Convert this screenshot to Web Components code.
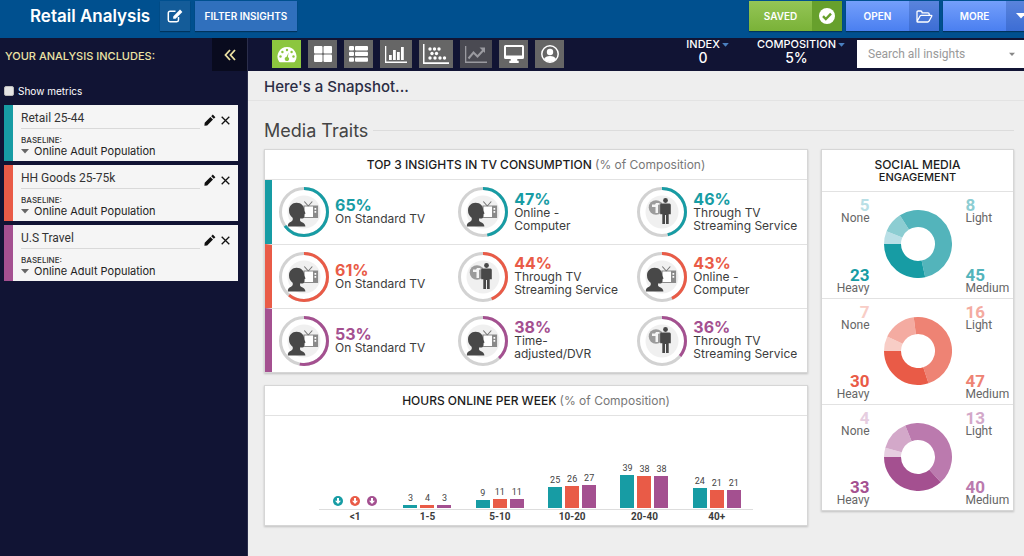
<!DOCTYPE html>
<html lang="en">
<head>
<meta charset="utf-8">
<meta name="viewport" content="width=device-width, initial-scale=1">
<title>Retail Analysis</title>
<style>
  html { --teal: #179ca4; --red: #e95b47; --plum: #a45090; --navy: #111434; --line: #e2e2e2; }
  body { margin: 0; min-height: 100vh; background: #eee; color: #3c3c3c; font: 12px/16px Inter, "Liberation Sans", sans-serif; }
</style>
</head>
<body>
<analysis-app></analysis-app>

<script>
const BASE = `<style>
  :host { display: block; box-sizing: border-box; }
  *, *::before, *::after { box-sizing: border-box; }
  button, input { font: inherit; color: inherit; margin: 0; padding: 0; border: 0; border-radius: 0; background: none; }
  button { cursor: pointer; }
  h1, h2, h3, p { margin: 0; font-weight: inherit; font-size: inherit; }
  svg { display: block; }
</style>`;

const element = (name, render) => customElements.define(name, class extends HTMLElement {
  connectedCallback() {
    if (this.shadowRoot) return;
    const t = document.createElement('template');
    t.innerHTML = BASE + render(this);
    this.attachShadow({ mode: 'open' }).append(t.content.cloneNode(true));
  }
});

const svg = (w, h, body) => `<svg width="${w}" height="${h}" viewBox="0 0 ${w} ${h}" fill="currentColor" aria-hidden="true">${body}</svg>`;

const ICONS = {
  edit: svg(16, 14, '<path d="M11.5 8v3a1.7 1.7 0 0 1-1.7 1.7H3A1.7 1.7 0 0 1 1.3 11V4A1.7 1.7 0 0 1 3 2.3h5.500" fill="none" stroke="currentColor" stroke-width="1.5"/><path d="M13 .6 15.4 3 8.6 9.8H6.2V7.4z"/>'),
  check: svg(16, 16, '<circle cx="8" cy="8" r="8" fill="#fff"/><path d="m4 8.200 2.800 2.800L12 5.600" fill="none" stroke="#67a02c" stroke-width="2.4"/>'),
  folder: svg(17, 13, '<path d="M1 11V2.200q0-1.200 1.200-1.200h2.600Q6 1 6 2.200v.6h6q1.200 0 1.200 1.200v1.500M1 11.500 4.200 5.800q.3-.5 1-.5h10q1 0 .5.9l-2.700 5q-.5.8-1.200.8H1.500Q.8 12 1 11.500z" fill="none" stroke="currentColor" stroke-width="1.3" stroke-linejoin="round"/>'),
  caret: svg(10, 6, '<path d="M0 0h10L5 5.500z"/>'),
  dashboard: svg(20, 17, '<path d="M10 1a9.500 9.500 0 0 0-8 14.600q.4.6 1 .6h14q.6 0 1-.6A9.500 9.500 0 0 0 10 1z"/><g fill="#8cc63f"><circle cx="3.5" cy="10.5" r="1.2"/><circle cx="5.4" cy="6" r="1.2"/><circle cx="10" cy="4" r="1.2"/><circle cx="14.6" cy="6" r="1.2"/><circle cx="16.5" cy="10.5" r="1.2"/><path d="m11.600 6.600-.7 4.300a2.200 2.200 0 1 1-1.300-.2z"/></g>'),
  tiles: svg(18, 16, '<rect width="8.5" height="7.4" rx="1"/><rect x="9.5" width="8.5" height="7.4" rx="1"/><rect y="8.6" width="8.5" height="7.4" rx="1"/><rect x="9.5" y="8.6" width="8.5" height="7.4" rx="1"/>'),
  list: svg(19, 16, '<rect width="5" height="4.4" rx="1"/><rect x="6" width="13" height="4.4" rx="1"/><rect y="5.7" width="5" height="4.4" rx="1"/><rect x="6" y="5.7" width="13" height="4.4" rx="1"/><rect y="11.4" width="5" height="4.4" rx="1"/><rect x="6" y="11.4" width="13" height="4.4" rx="1"/>'),
  bars: svg(22, 17, '<path d="M0 0h1.300v15.500H22V17H0zM4 9h2.800v5H4zM8 4h2.800v10H8zM12 6h2.800v8H12zM16 1h2.800v13H16z"/>'),
  scatter: svg(26, 20, '<path d="M0 0h1.500v18.300H26V20H0z"/><circle cx="7" cy="5" r="1.7"/><circle cx="11.500" cy="5" r="1.7"/><circle cx="16" cy="5" r="1.7"/><circle cx="9" cy="9.500" r="1.7"/><circle cx="13.500" cy="9.500" r="1.7"/><circle cx="7" cy="14" r="1.7"/><circle cx="12" cy="14" r="1.7"/><circle cx="17" cy="14" r="1.7"/><circle cx="21.500" cy="14" r="1.7"/>'),
  trend: svg(22, 17, '<path d="M0 0h1.300v15.500H22V17H0z"/><path d="m3.500 12.500 5-6 4 4L19 3.500" fill="none" stroke="currentColor" stroke-width="2"/><path d="M14.500 1.500H20V7z"/>'),
  screen: svg(20, 18, '<path fill-rule="evenodd" d="M1.500 0h17Q20 0 20 1.500v11q0 1.500-1.500 1.500h-5.200v1.800h1.400V18H5.300v-2.200h1.400V14H1.500Q0 14 0 12.500v-11Q0 0 1.500 0zM2 2v8.500h16V2z"/>'),
  user: svg(18, 18, '<circle cx="9" cy="9" r="8.2" fill="none" stroke="currentColor" stroke-width="1.5"/><circle cx="9" cy="7" r="3.2"/><path d="M3 14q1.500-3 6-3t6 3q-2.300 3-6 3t-6-3z"/>'),
  collapse: svg(12, 12, '<path d="M6 1 1.500 6 6 11M11 1 6.500 6 11 11" fill="none" stroke="currentColor" stroke-width="1.8"/>'),
  pencil: svg(12, 12, '<path d="m8.800.6 2.600 2.600-1.600 1.600-2.600-2.600zM6.400 3 9 5.600 3.200 11.400.4 11.800.7 8.800z"/>'),
  close: svg(9, 9, '<path d="m.7.7 7.600 7.600M8.300.7.7 8.300" stroke="currentColor" stroke-width="1.3"/>'),
  low: svg(10, 10, '<circle cx="5" cy="5" r="5"/><path d="M4 2h2v2.700h2L5 8 2 4.700h2z" fill="#fff"/>'),
};

/* Head in profile, looking at a television set. */
const VIEWER = `<path d="M26 20h13.500v11.500H26z" fill="#fff" stroke="#8a8a8a" stroke-width="1.2"/>
<path d="M35 20h4.500v11.500H35z" fill="#8a8a8a"/>
<path d="M36.500 22h1.700v1.700h-1.700zM36.500 25h1.700v1.700h-1.700z" fill="#fff"/>
<path d="m30.300 20-4-4.500M30.300 20l4-4.500" stroke="#777" stroke-width="1.1"/>
<path d="M18.500 16.800C23.500 16.800 26.200 20 26.200 24.500L27.600 27.400 26.400 28 26 31.500Q25.700 32.600 24 32.500L22 32.600Q21.500 35 23.500 36 27.200 37.200 27.400 40.500L9.800 40.500Q9.600 37 13 35.800 15.500 34.500 14.600 31.800 11 29 11 24.500C11 20 14.200 16.800 18.500 16.800Z" fill="#484848"/>`;
/* Standing figure beside a round remote-control badge. */
const PERSON = `<circle cx="20" cy="21.500" r="7.300" fill="#9b9b9b"/>
<path d="M16 18.500h3l1-1.500h3.500v1.800H22V27h-2.500v-6H16z" fill="#f4f4f4"/>
<circle cx="29.500" cy="14.500" r="2.400" fill="#484848"/>
<path d="M25.500 17.500H33.500Q34.800 17.500 34.800 19V28.200H32.700V38H30V29H29V38H26.300V28.200H24.200V19Q24.200 17.500 25.500 17.500Z" fill="#484848"/>`;

/* A header button; the icon attribute adds a shaded compartment at its end. */
element('action-button', el => {
  const icon = el.getAttribute('icon'), label = el.getAttribute('label');
  return `
<style>
  :host { height: 30px; }
  button { display: flex; align-items: stretch; width: 100%; height: 100%; color: #fff; font-size: 10px; font-weight: 600; background: var(--fill, #3070bd); box-shadow: 0 1px 1px rgba(0,0,0,.35); }
  .text { flex: 1; align-self: center; text-align: center; white-space: nowrap; }
  .icon { display: grid; place-items: center; width: 30px; background: var(--shade, transparent); }
</style>
<button type="button" ${label ? `aria-label="${label}"` : ''}>
  ${label ? '' : '<span class="text"><slot></slot></span>'}
  ${icon ? `<span class="icon">${ICONS[icon]}</span>` : ''}
</button>`;
});

element('app-header', () => `
<style>
  :host { display: flex; align-items: flex-start; height: 38px; padding-top: 1px; background: #00508f; color: #fff; overflow: hidden; }
  h1 { width: 130px; margin-left: 30px; font-size: 17px; font-weight: 600; line-height: 30px; white-space: nowrap; }
  .edit { width: 30px; margin-right: 5px; --fill: #145c99; }
  .filter { width: 102px; }
  .end { display: flex; gap: 4px; margin-left: auto; margin-right: -12px; }
  .end action-button { width: 93px; --fill: linear-gradient(#749ffb, #4a7ff0); --shade: rgba(30,70,150,.3); }
  .end .saved { --fill: linear-gradient(#94c556, #7ab238); --shade: #67a02c; }
</style>
<h1>Retail Analysis</h1>
<action-button class="edit" icon="edit" label="Edit title"></action-button>
<action-button class="filter">FILTER INSIGHTS</action-button>
<div class="end">
  <action-button class="saved" icon="check">SAVED</action-button>
  <action-button icon="folder">OPEN</action-button>
  <action-button icon="caret">MORE</action-button>
</div>`);

element('segment-card', () => `
<style>
  :host { display: grid; grid-template-columns: 9px 1fr auto; height: 56px; background: #f5f5f5; color: #333; }
  .strip { background: var(--tone); }
  .body { padding: 4px 0 0 8px; min-width: 0; }
  .name { font: 12px/18px Roboto, sans-serif; height: 20px; border-bottom: 1px solid #d9d9d9; }
  .label { margin-top: 6px; font-size: 8px; line-height: 10px; font-weight: 500; }
  .base { display: flex; align-items: center; gap: 5px; font-size: 11px; line-height: 13px; color: #222; white-space: nowrap; }
  .base svg { width: 8px; height: 5px; color: #666; }
  .tools { display: flex; gap: 5px; align-self: start; padding: 9px 8px 0 4px; color: #111; }
  .tools button { display: grid; place-items: center; height: 12px; }
</style>
<div class="strip"></div>
<div class="body">
  <h3 class="name"><slot></slot></h3>
  <div class="label">BASELINE:</div>
  <button type="button" class="base">${ICONS.caret}Online Adult Population</button>
</div>
<div class="tools">
  <button type="button" aria-label="Edit segment">${ICONS.pencil}</button>
  <button type="button" aria-label="Remove segment">${ICONS.close}</button>
</div>`);

element('side-panel', () => `
<style>
  :host { background: var(--navy); color: #fff; border-right: 1px solid #2b2e4c; }
  .top { display: flex; align-items: stretch; justify-content: space-between; height: 33px; padding-left: 5px; }
  h2 { align-self: center; padding-top: 2px; color: #ece2a4; font-size: 11px; font-weight: 500; white-space: nowrap; }
  .top button { display: grid; place-items: center; width: 35px; background: #090b1e; color: #ece2a4; }
  label { display: flex; align-items: center; gap: 4px; padding: 12px 4px 6px; font: 10px/16px Inter, sans-serif; }
  input { appearance: none; width: 10px; height: 10px; background: #e4e4e4; border: 1px solid #bbb; border-radius: 2px; }
  input:checked { background: var(--teal); }
  .cards { display: grid; gap: 4px; padding: 0 9px 16px 4px; }
</style>
<div class="top"><h2>YOUR ANALYSIS INCLUDES:</h2><button type="button" aria-label="Collapse panel">${ICONS.collapse}</button></div>
<label><input type="checkbox">Show metrics</label>
<div class="cards">
  <segment-card style="--tone: var(--teal)">Retail 25-44</segment-card>
  <segment-card style="--tone: var(--red)">HH Goods 25-75k</segment-card>
  <segment-card style="--tone: var(--plum)">U.S Travel</segment-card>
</div>`);

element('metric-picker', el => `
<style>
  button { display: block; color: #fff; font-size: 11px; line-height: 13px; font-weight: 500; text-align: center; }
  .name { display: flex; align-items: center; gap: 2px; }
  .name svg { width: 7px; height: 4px; color: #4a80c0; }
  .value { display: block; font-size: 14px; padding-right: 9px; }
</style>
<button type="button"><span class="name"><slot></slot>${ICONS.caret}</span><span class="value">${el.getAttribute('value')}</span></button>`);

element('tool-bar', () => `
<style>
  :host { display: flex; align-items: flex-start; height: 33px; padding: 2px 0 0 24px; background: var(--navy); }
  nav { display: flex; gap: 7px; }
  nav button { display: grid; place-items: center; width: 29px; height: 28px; background: #666; color: #fff; }
  nav .wide { width: 32px; }
  nav .widest { width: 34px; }
  nav .on { background: #8cc63f; }
  nav .off { background: #4a4a52; color: #9a9aa0; }
  .end { display: flex; align-items: flex-start; margin-left: auto; }
  .metrics { display: flex; gap: 28px; margin: -2px 12px 0 0; }
  .search { display: flex; align-items: center; width: 167px; height: 28px; padding: 0 9px 0 11px; background: #fff; color: #888; }
  input { flex: 1; min-width: 0; width: 0; font: 12px/16px Roboto, sans-serif; outline: 0; }
  input::placeholder { color: #999; opacity: 1; }
  .search svg { width: 6px; height: 5px; }
</style>
<nav aria-label="Views">
  <button type="button" class="on" aria-label="Snapshot">${ICONS.dashboard}</button>
  <button type="button" aria-label="Tiles">${ICONS.tiles}</button>
  <button type="button" aria-label="List">${ICONS.list}</button>
  <button type="button" class="wide" aria-label="Bar chart">${ICONS.bars}</button>
  <button type="button" class="widest" aria-label="Scatter plot">${ICONS.scatter}</button>
  <button type="button" class="wide off" aria-label="Trend" disabled>${ICONS.trend}</button>
  <button type="button" aria-label="Media">${ICONS.screen}</button>
  <button type="button" aria-label="Personas">${ICONS.user}</button>
</nav>
<div class="end">
  <div class="metrics">
    <metric-picker value="0">INDEX</metric-picker>
    <metric-picker value="5%">COMPOSITION</metric-picker>
  </div>
  <label class="search"><input type="text" placeholder="Search all insights" aria-label="Search all insights">${ICONS.caret}</label>
</div>`);

element('panel-card', () => `
<style>
  :host { background: #fff; border: 1px solid #d6d6d6; box-shadow: 0 1px 2px rgba(0,0,0,.2); }
  h3 { display: flex; flex-direction: column; justify-content: center; min-height: var(--head, 30px); border-bottom: 1px solid var(--line); color: #1c1c1c; font-size: 12px; line-height: 13px; font-weight: 500; text-align: center; }
</style>
<h3><slot name="title"></slot></h3>
<slot></slot>`);

element('insight-cell', el => `
<style>
  :host { display: flex; align-items: center; gap: 5px; min-width: 0; }
  svg { flex: none; }
  .text { min-width: 0; font-size: 12px; line-height: 13px; color: #3c3c3c; white-space: nowrap; }
  .text b { display: block; font-size: 16px; font-weight: 700; color: var(--tone); }
</style>
${svg(52, 52, `<circle cx="26" cy="26" r="16.500" fill="#f0f0f0"/>${el.getAttribute('icon') === 'viewer' ? VIEWER : PERSON}
<circle cx="26" cy="26" r="23.500" fill="none" stroke="#d2d2d2" stroke-width="3"/>
<circle cx="26" cy="26" r="23.500" fill="none" stroke="var(--tone)" stroke-width="3" pathLength="100" stroke-dasharray="${el.getAttribute('value')} 100" transform="rotate(-90 26 26)"/>`)}
<div class="text"><b>${el.getAttribute('value')}%</b><slot></slot></div>`);

const STREAM = 'Through TV<br>Streaming Service', COMPUTER = 'Online -<br>Computer', TV = 'On Standard TV';
const INSIGHTS = [
  ['teal', [[65, 'viewer', TV], [47, 'viewer', COMPUTER], [46, 'person', STREAM]]],
  ['red', [[61, 'viewer', TV], [44, 'person', STREAM], [43, 'viewer', COMPUTER]]],
  ['plum', [[53, 'viewer', TV], [38, 'viewer', 'Time-<br>adjusted/DVR'], [36, 'person', STREAM]]],
];
element('insight-rows', () => `
<style>
  .row { display: grid; grid-template-columns: 21fr 21fr 20fr; height: 64px; padding-left: 6px; border-left: 7px solid var(--tone); }
  .row + .row { border-top: 1px solid var(--line); }
</style>
${INSIGHTS.map(([tone, cells]) => `<div class="row" style="--tone: var(--${tone})">${cells.map(([v, i, t]) => `<insight-cell value="${v}" icon="${i}">${t}</insight-cell>`).join('')}</div>`).join('')}`);

const HOURS = [['&lt;1', [0, 0, 0]], ['1-5', [3, 4, 3]], ['5-10', [9, 11, 11]], ['10-20', [25, 26, 27]], ['20-40', [39, 38, 38]], ['40+', [24, 21, 21]]];
element('hours-chart', () => `
<style>
  :host { padding: 0 54px; font-family: Roboto, sans-serif; }
  .plot { display: grid; grid-template-columns: repeat(6, 1fr); padding-top: 45px; }
  .bars { display: flex; justify-content: center; align-items: flex-end; gap: 3px; height: 49px; padding-bottom: 1px; border-bottom: 1px solid #ddd; }
  .bar { width: 14px; font-size: 9px; line-height: 12px; text-align: center; color: #444; }
  .bar i { display: block; margin-top: 1px; background: var(--tone); }
  .bar svg { margin: 0 auto 2px 2px; color: var(--tone); }
  .label { display: block; font-size: 10px; line-height: 14px; font-weight: 700; text-align: center; }
</style>
<div class="plot">${HOURS.map(([name, vals]) => `<div><div class="bars">${vals.map((v, i) => `<div class="bar" style="--tone: var(--${['teal', 'red', 'plum'][i]})">${v ? `${v}<i style="height: ${Math.round(v * .85)}px"></i>` : ICONS.low}</div>`).join('')}</div><span class="label">${name}</span></div>`).join('')}</div>`);

const sector = (from, to, fill) => {
  const p = (a, r) => { const t = Math.PI * (1 + 2 * a); return `${(34 + r * Math.cos(t)).toFixed(2)} ${(34 + r * Math.sin(t)).toFixed(2)}`; };
  const big = to - from > .5 ? 1 : 0;
  return `<path fill="${fill}" d="M${p(from, 34)}A34 34 0 ${big} 1 ${p(to, 34)}L${p(to, 17)}A17 17 0 ${big} 0 ${p(from, 17)}z"/>`;
};
element('engagement-donut', el => {
  const vals = el.getAttribute('values').split(' ').map(Number);
  const tones = el.getAttribute('tones').split(' ');
  const total = vals.reduce((a, b) => a + b);
  let at = 0;
  const parts = vals.map((v, i) => { const s = sector(at / total, (at + v) / total, tones[i]); at += v; return s; }).join('');
  const cell = (i, name) => `<div class="k${i}"><b style="color: ${tones[i]}">${vals[i]}</b>${name}</div>`;
  return `
<style>
  :host { display: grid; grid-template-columns: 1fr 68px 1fr; grid-template-rows: 1fr auto; column-gap: 14px; height: 106px; padding: 7px 0 3px; font: 12px/14px Roboto, sans-serif; color: #666; }
  b { display: block; font-size: 17px; line-height: 12px; }
  svg { grid-area: 1 / 2 / 3 / 3; align-self: center; margin-top: -6px; }
  .k0 { grid-area: 1 / 1; text-align: right; }
  .k1 { grid-area: 1 / 3; }
  .k2 { grid-area: 2 / 3; }
  .k3 { grid-area: 2 / 1; text-align: right; }
</style>
${svg(68, 68, parts)}${cell(0, 'None')}${cell(1, 'Light')}${cell(3, 'Heavy')}${cell(2, 'Medium')}`;
});

element('snapshot-view', () => `
<style>
  :host { padding: 0 10px 16px 16px; }
  .intro { display: flex; align-items: center; height: 30px; margin: 0 -10px 0 -16px; padding: 2px 16px 0; border-bottom: 1px solid #e3e3e3; font-size: 15px; line-height: 20px; color: #2b2d45; font-weight: 500; }
  .section { display: flex; align-items: center; gap: 5px; margin: 19px 0 8px; font-size: 18px; line-height: 21px; color: #444; }
  .section::after { content: ""; flex: 1; border-top: 1px solid #dcdcdc; }
  .grid { display: grid; grid-template-columns: minmax(0, 1fr) 193px; gap: 13px; align-items: start; }
  .left { display: grid; gap: 12px; }
  .hours { height: 141px; }
  .note { color: #777; font-weight: 400; }
  .social { --head: 42px; }
  .sub { display: block; font-size: 11px; }
  engagement-donut + engagement-donut { border-top: 1px solid var(--line); }
</style>
<h2 class="intro">Here's a Snapshot...</h2>
<h2 class="section">Media Traits</h2>
<div class="grid">
  <div class="left">
    <panel-card><span slot="title">TOP 3 INSIGHTS IN TV CONSUMPTION <span class="note">(% of Composition)</span></span><insight-rows></insight-rows></panel-card>
    <panel-card class="hours"><span slot="title">HOURS ONLINE PER WEEK <span class="note">(% of Composition)</span></span><hours-chart></hours-chart></panel-card>
  </div>
  <panel-card class="social"><span slot="title">SOCIAL MEDIA<span class="sub">ENGAGEMENT</span></span>
    <engagement-donut values="5 8 45 23" tones="#b9dfe6 #8ccdd2 #53b4bb #179ca4"></engagement-donut>
    <engagement-donut values="7 16 47 30" tones="#f8cdc6 #f4aba1 #ee8374 #e95b47"></engagement-donut>
    <engagement-donut values="4 13 40 33" tones="#e6cde0 #d3a8c9 #bb7aae #a45090"></engagement-donut>
  </panel-card>
</div>`);

element('analysis-app', () => `
<style>
  :host { display: grid; grid-template: auto auto 1fr / 248px minmax(0, 1fr); min-height: 100vh; }
  app-header { grid-column: 1 / 3; }
  side-panel { grid-row: 2 / 4; }
</style>
<app-header></app-header>
<side-panel></side-panel>
<tool-bar></tool-bar>
<snapshot-view></snapshot-view>`);
</script>
</body>
</html>
